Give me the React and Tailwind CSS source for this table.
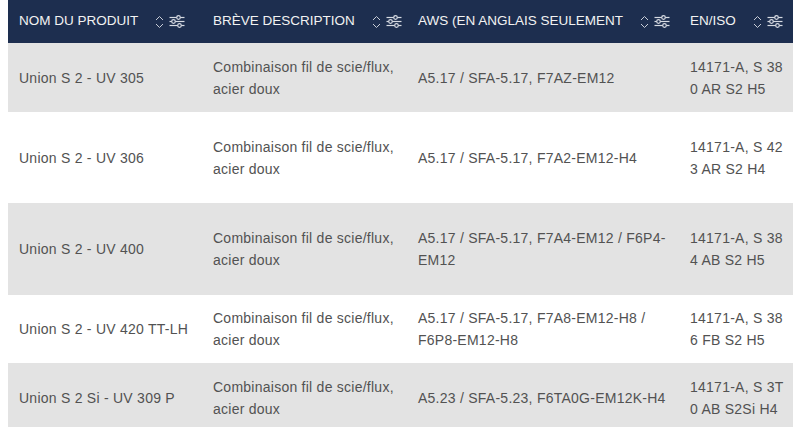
import React from "react";

const rows = [
  {
    name: "Union S 2 - UV 305",
    aws: ["A5.17 / SFA-5.17, F7AZ-EM12"],
    iso: ["14171-A, S 38", "0 AR S2 H5"],
    h: "h-[69px]",
    bg: "bg-[#e3e3e3]",
  },
  {
    name: "Union S 2 - UV 306",
    aws: ["A5.17 / SFA-5.17, F7A2-EM12-H4"],
    iso: ["14171-A, S 42", "3 AR S2 H4"],
    h: "h-[91px]",
    bg: "bg-white",
  },
  {
    name: "Union S 2 - UV 400",
    aws: ["A5.17 / SFA-5.17, F7A4-EM12 / F6P4-", "EM12"],
    iso: ["14171-A, S 38", "4 AB S2 H5"],
    h: "h-[92px]",
    bg: "bg-[#e3e3e3]",
  },
  {
    name: "Union S 2 - UV 420 TT-LH",
    aws: ["A5.17 / SFA-5.17, F7A8-EM12-H8 /", "F6P8-EM12-H8"],
    iso: ["14171-A, S 38", "6 FB S2 H5"],
    h: "h-[68px]",
    bg: "bg-white",
  },
  {
    name: "Union S 2 Si - UV 309 P",
    aws: ["A5.23 / SFA-5.23, F6TA0G-EM12K-H4"],
    iso: ["14171-A, S 3T", "0 AB S2Si H4"],
    h: "h-[70px]",
    bg: "bg-[#e3e3e3]",
  },
];

function SortIcon() {
  return (
    <svg width="9" height="16" viewBox="0 0 9 16" fill="none" stroke="#c9ced8" strokeWidth="1" className="shrink-0">
      <path d="M1 6 L4.5 2.5 L8 6" />
      <path d="M1 10 L4.5 13.5 L8 10" />
    </svg>
  );
}

function FilterIcon() {
  return (
    <svg width="16" height="13" viewBox="0 0 16 13" fill="none" stroke="#d6dae2" strokeWidth="1.2" className="shrink-0">
      <path d="M0.5 2.5 H15.5" />
      <circle cx="9.5" cy="2.5" r="1.8" fill="#1d2e4f" />
      <path d="M0.5 6.5 H15.5" />
      <circle cx="4.5" cy="6.5" r="1.8" fill="#1d2e4f" />
      <path d="M0.5 10.5 H15.5" />
      <circle cx="10.5" cy="10.5" r="1.8" fill="#1d2e4f" />
    </svg>
  );
}

function Head({ label, w }) {
  return (
    <div className={`${w} shrink-0 flex items-center px-[11px]`}>
      <span className="whitespace-nowrap text-[13.5px]">{label}</span>
      <span className="ml-[17px] flex items-center gap-[5px]">
        <SortIcon />
        <FilterIcon />
      </span>
    </div>
  );
}

const cols = ["w-[194px]", "w-[205px]", "w-[272px]", "w-[130px]"];

export default function App() {
  return (
    <div className="w-[793px] h-[427px] overflow-hidden bg-white pl-[8px] font-['Liberation_Sans',Arial,sans-serif] text-[14px]">
      <div className="w-max">
        <div className="flex h-[43px] bg-[#1d2e4f] text-[#f2f2f2]">
          <Head label="NOM DU PRODUIT" w={cols[0]} />
          <Head label="BRÈVE DESCRIPTION" w={cols[1]} />
          <Head label="AWS (EN ANGLAIS SEULEMENT" w={cols[2]} />
          <Head label="EN/ISO" w={cols[3]} />
        </div>
        {rows.map((r) => (
          <div key={r.name} className={`flex items-center ${r.h} ${r.bg} text-[#525252] leading-[22px] tracking-[0.25px]`}>
            <div className={`${cols[0]} shrink-0 px-[11px]`}>{r.name}</div>
            <div className={`${cols[1]} shrink-0 px-[11px]`}>
              Combinaison fil de scie/flux,
              <br />
              acier doux
            </div>
            <div className={`${cols[2]} shrink-0 px-[11px]`}>
              {r.aws.map((l) => (
                <div key={l} className="whitespace-nowrap">{l}</div>
              ))}
            </div>
            <div className={`${cols[3]} shrink-0 px-[11px]`}>
              {r.iso.map((l) => (
                <div key={l} className="whitespace-nowrap">{l}</div>
              ))}
            </div>
          </div>
        ))}
      </div>
    </div>
  );
}
